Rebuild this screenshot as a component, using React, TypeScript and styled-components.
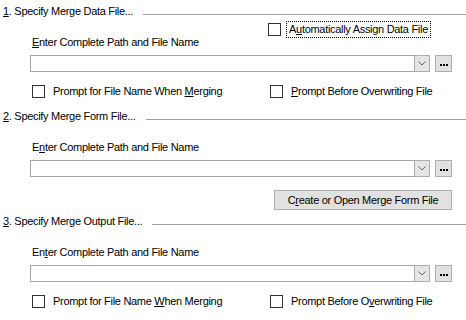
import React from 'react';
import styled, { createGlobalStyle } from 'styled-components';

const GlobalStyle = createGlobalStyle`
  html, body {
    margin: 0;
    padding: 0;
    background: #ffffff;
  }
  body {
    font-family: "Liberation Sans", Arial, sans-serif;
    font-size: 11px;
    line-height: 13px;
    letter-spacing: -0.3px;
    color: #000;
  }
`;

const Page = styled.div`
  width: 466px;
  height: 320px;
  display: flex;
  flex-direction: column;
  overflow: hidden;
`;

const Section = styled.section<{ $top: number }>`
  display: flex;
  flex-direction: column;
  margin-top: ${p => p.$top}px;
`;

const Header = styled.div`
  display: flex;
  align-items: flex-start;
  gap: 10px;
  padding-left: 3px;
  height: 13px;
`;

const Title = styled.span`
  white-space: nowrap;
`;

const Rule = styled.div`
  flex: 1;
  height: 1px;
  margin-top: 9px;
  background: #a0a0a0;
`;

const Body = styled.div`
  display: flex;
  flex-direction: column;
  padding: 0 14px 0 30px;
`;

const ExtraRow = styled.div`
  height: 18px;
  display: flex;
  align-items: flex-end;
  padding-left: 238px;
`;

const FieldLabel = styled.div`
  padding-left: 2px;
  height: 13px;
`;

const ComboRow = styled.div`
  display: flex;
  gap: 5px;
  margin-top: 6px;
`;

const Combo = styled.div`
  flex: 1;
  height: 17px;
  box-sizing: border-box;
  border: 1px solid #a6a6a6;
  background: #fff;
  display: flex;
  justify-content: flex-end;
`;

const DropButton = styled.div`
  width: 16px;
  margin: -1px -1px -1px 0;
  box-sizing: border-box;
  border: 1px solid #adadad;
  background: #e5e5e5;
  display: flex;
  align-items: center;
  justify-content: center;
`;

const BrowseButton = styled.div`
  width: 17px;
  height: 17px;
  box-sizing: border-box;
  border: 1px solid #adadad;
  background: #e1e1e1;
  display: flex;
  align-items: flex-end;
  justify-content: center;
  gap: 1px;
  padding-bottom: 5px;
`;

const Dot = styled.span`
  width: 2px;
  height: 2px;
  background: #000;
`;

const CheckRow = styled.div`
  display: grid;
  grid-template-columns: 238px 1fr;
  padding-left: 2px;
  margin-top: 13px;
`;

const Check = styled.label`
  display: flex;
  align-items: center;
  gap: 7px;
  white-space: nowrap;
  height: 13px;
`;

const Box = styled.span`
  width: 13px;
  height: 13px;
  box-sizing: border-box;
  border: 1px solid #333;
  background: #fff;
  flex: none;
`;

const CheckText = styled.span<{ $focused?: boolean }>`
  outline: ${p => (p.$focused ? '1px dotted #000' : 'none')};
  outline-offset: 1px;
  padding: 0 1px;
`;

const ButtonRow = styled.div`
  display: flex;
  justify-content: flex-end;
  margin-top: 13px;
`;

const PushButton = styled.div`
  width: 178px;
  height: 20px;
  box-sizing: border-box;
  border: 1px solid #adadad;
  background: #e1e1e1;
  display: flex;
  align-items: center;
  justify-content: center;
`;

const Chevron = () => (
  <svg width="8" height="5" viewBox="0 0 8 5">
    <path d="M0.5 0.5 L4 4 L7.5 0.5" fill="none" stroke="#606060" strokeWidth="1" />
  </svg>
);

const PathField: React.FC = () => (
  <ComboRow>
    <Combo>
      <DropButton>
        <Chevron />
      </DropButton>
    </Combo>
    <BrowseButton title="...">
      <Dot />
      <Dot />
      <Dot />
    </BrowseButton>
  </ComboRow>
);

const CheckBox: React.FC<{ children: React.ReactNode; focused?: boolean }> = ({ children, focused }) => (
  <Check>
    <Box />
    <CheckText $focused={focused}>{children}</CheckText>
  </Check>
);

export default function App() {
  return (
    <Page>
      <GlobalStyle />

      <Section $top={5}>
        <Header>
          <Title><u>1</u>. Specify Merge Data File...</Title>
          <Rule />
        </Header>
        <Body>
          <ExtraRow>
            <CheckBox focused>A<u>u</u>tomatically Assign Data File</CheckBox>
          </ExtraRow>
          <FieldLabel><u>E</u>nter Complete Path and File Name</FieldLabel>
          <PathField />
          <CheckRow>
            <CheckBox>Prompt for File Name When <u>M</u>erging</CheckBox>
            <CheckBox><u>P</u>rompt Before Overwriting File</CheckBox>
          </CheckRow>
        </Body>
      </Section>

      <Section $top={12}>
        <Header>
          <Title><u>2</u>. Specify Merge Form File...</Title>
          <Rule />
        </Header>
        <Body>
          <ExtraRow />
          <FieldLabel>E<u>n</u>ter Complete Path and File Name</FieldLabel>
          <PathField />
          <ButtonRow>
            <PushButton>C<u>r</u>eate or Open Merge Form File</PushButton>
          </ButtonRow>
        </Body>
      </Section>

      <Section $top={5}>
        <Header>
          <Title><u>3</u>. Specify Merge Output File...</Title>
          <Rule />
        </Header>
        <Body>
          <ExtraRow />
          <FieldLabel>En<u>t</u>er Complete Path and File Name</FieldLabel>
          <PathField />
          <CheckRow>
            <CheckBox>Prompt for File Name <u>W</u>hen Merging</CheckBox>
            <CheckBox>Prompt Before O<u>v</u>erwriting File</CheckBox>
          </CheckRow>
        </Body>
      </Section>
    </Page>
  );
}
